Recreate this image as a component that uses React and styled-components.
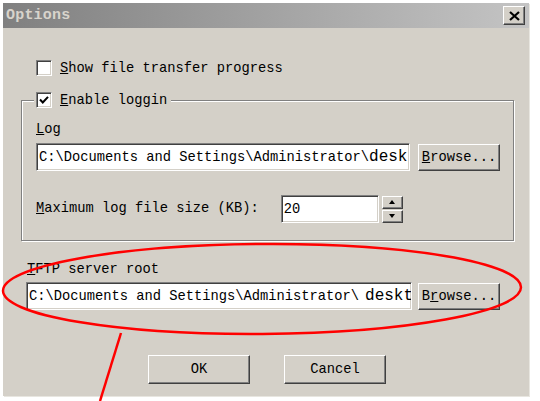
import React from "react";
import styled, { createGlobalStyle, css } from "styled-components";

const Global = createGlobalStyle`
  html, body { margin: 0; padding: 0; background: #ffffff; }
  body {
    width: 540px; height: 401px; overflow: hidden;
    font-family: "Liberation Mono", "DejaVu Sans Mono", monospace;
    font-size: 13.75px; color: #000;
  }
  * { box-sizing: border-box; }
`;

const Page = styled.div`
  position: relative;
  width: 540px;
  height: 401px;
  padding: 3px 0 0 3px;
`;

const Window = styled.div`
  width: 526px;
  height: 393px;
  background: #d4d0c8;
  display: flex;
  flex-direction: column;
  box-shadow: 1px 1px 0 #e8e6e0;
`;

const TitleBar = styled.div`
  height: 25px;
  flex: none;
  background: linear-gradient(to right, #808080, #c4c4c4);
  display: flex;
  align-items: center;
  justify-content: space-between;
  padding: 0 4px 0 3px;
`;

const Title = styled.span`
  color: #d8d4cc;
  font-weight: bold;
  font-size: 15px;
  letter-spacing: 0.2px;
`;

const raised = css`
  background: #d4d0c8;
  border: 1px solid;
  border-color: #ffffff #404040 #404040 #ffffff;
  box-shadow: inset -1px -1px 0 #808080;
`;

const sunken = css`
  background: #ffffff;
  border: 1px solid;
  border-color: #808080 #ffffff #ffffff #808080;
  box-shadow: inset 1px 1px 0 #404040, inset -1px -1px 0 #d4d0c8;
`;

const CloseBtn = styled.div`
  ${raised};
  width: 22px;
  height: 19px;
  display: flex;
  align-items: center;
  justify-content: center;
`;

const Body = styled.div`
  display: flex;
  flex-direction: column;
  align-items: flex-start;
`;

const CheckRow = styled.div`
  display: flex;
  align-items: center;
  gap: 8px;
  height: 16px;
  margin: ${(p) => p.$margin || "0"};
  background: ${(p) => (p.$legend ? "#d4d0c8" : "transparent")};
  padding: ${(p) => (p.$legend ? "0 4px 0 2px" : "0")};
`;

const Box = styled.div`
  ${sunken};
  width: 16px;
  height: 16px;
  display: flex;
  align-items: center;
  justify-content: center;
`;

const GroupBox = styled.div`
  margin: 24px 0 0 18px;
  width: 493px;
  height: 141px;
  border: 1px solid #808080;
  box-shadow: inset 1px 1px 0 #ffffff, 1px 1px 0 #ffffff;
  display: flex;
  flex-direction: column;
  align-items: flex-start;
  padding-left: 12px;
`;

const Label = styled.div`
  height: 16px;
  line-height: 16px;
  margin: ${(p) => p.$margin || "0"};
  white-space: nowrap;
`;

const FieldRow = styled.div`
  display: flex;
  align-items: center;
  gap: ${(p) => p.$gap || 8}px;
  margin: ${(p) => p.$margin || "0"};
`;

const TextBox = styled.div`
  ${sunken};
  width: ${(p) => p.$w}px;
  height: 28px;
  display: flex;
  align-items: center;
  padding-left: 2px;
  overflow: hidden;
  white-space: nowrap;
`;

const Tail = styled.span`
  font-size: 16px;
  font-family: "Liberation Mono", monospace;
  margin-left: ${(p) => p.$ml || 0}px;
`;

const Button = styled.div`
  ${raised};
  width: ${(p) => p.$w}px;
  height: ${(p) => p.$h || 27}px;
  display: flex;
  align-items: center;
  justify-content: center;
  white-space: nowrap;
`;

const Spin = styled.div`
  display: flex;
  align-items: center;
  gap: 3px;
`;

const SpinButtons = styled.div`
  display: flex;
  flex-direction: column;
  gap: 1px;
`;

const SpinBtn = styled.div`
  ${raised};
  width: 21px;
  height: 13px;
  display: flex;
  align-items: center;
  justify-content: center;
`;

const ButtonRow = styled.div`
  display: flex;
  gap: 34px;
  margin: 45px 0 0 145px;
`;

const Overlay = styled.svg`
  position: absolute;
  left: 0;
  top: 0;
  pointer-events: none;
`;

const Check = () => (
  <svg width="10" height="10" viewBox="0 0 10 10">
    <path d="M1 4.5 L3.8 7.5 L9 1.8" fill="none" stroke="#000" strokeWidth="2" />
  </svg>
);

const Arrow = ({ up }) => (
  <svg width="6" height="4" viewBox="0 0 6 4">
    <path d={up ? "M0 4 L3 0 L6 4 Z" : "M0 0 L3 4 L6 0 Z"} fill="#000" />
  </svg>
);

export default function App() {
  return (
    <>
      <Global />
      <Page>
        <Window>
          <TitleBar>
            <Title>Options</Title>
            <CloseBtn>
              <svg width="11" height="10" viewBox="0 0 11 10">
                <path d="M1 1 L10 9 M10 1 L1 9" stroke="#000" strokeWidth="2.2" />
              </svg>
            </CloseBtn>
          </TitleBar>
          <Body>
            <CheckRow $margin="32px 0 0 33px">
              <Box />
              <span><u>S</u>how file transfer progress</span>
            </CheckRow>
            <GroupBox>
              <CheckRow $legend $margin="-9px 0 0 0">
                <Box><Check /></Box>
                <span><u>E</u>nable loggin</span>
              </CheckRow>
              <Label $margin="14px 0 0 2px"><u>L</u>og</Label>
              <FieldRow $margin="5px 0 0 2px">
                <TextBox $w={374}>
                  C:\Documents and Settings\Administrator\<Tail>desk</Tail>
                </TextBox>
                <Button $w={82}><span><u>B</u>rowse...</span></Button>
              </FieldRow>
              <FieldRow $gap={22} $margin="24px 0 0 2px">
                <Label><u>M</u>aximum log file size (KB):</Label>
                <Spin>
                  <TextBox $w={98}>20</TextBox>
                  <SpinButtons>
                    <SpinBtn><Arrow up /></SpinBtn>
                    <SpinBtn><Arrow /></SpinBtn>
                  </SpinButtons>
                </Spin>
              </FieldRow>
            </GroupBox>
            <Label $margin="21px 0 0 24px"><u>T</u>FTP server root</Label>
            <FieldRow $gap={6} $margin="4px 0 0 23px">
              <TextBox $w={386}>
                C:\Documents and Settings\Administrator\<Tail $ml={6}>deskt</Tail>
              </TextBox>
              <Button $w={82}><span>B<u>r</u>owse...</span></Button>
            </FieldRow>
            <ButtonRow>
              <Button $w={102} $h={29}>OK</Button>
              <Button $w={102} $h={29}>Cancel</Button>
            </ButtonRow>
          </Body>
        </Window>
        <Overlay width="540" height="401" viewBox="0 0 540 401">
          <ellipse
            cx="262"
            cy="289"
            rx="259"
            ry="45"
            fill="none"
            stroke="#ff0000"
            strokeWidth="2.5"
            transform="rotate(-0.4 262 289)"
          />
          <path d="M121 333 L100 401" stroke="#ff0000" strokeWidth="2.5" fill="none" />
        </Overlay>
      </Page>
    </>
  );
}
